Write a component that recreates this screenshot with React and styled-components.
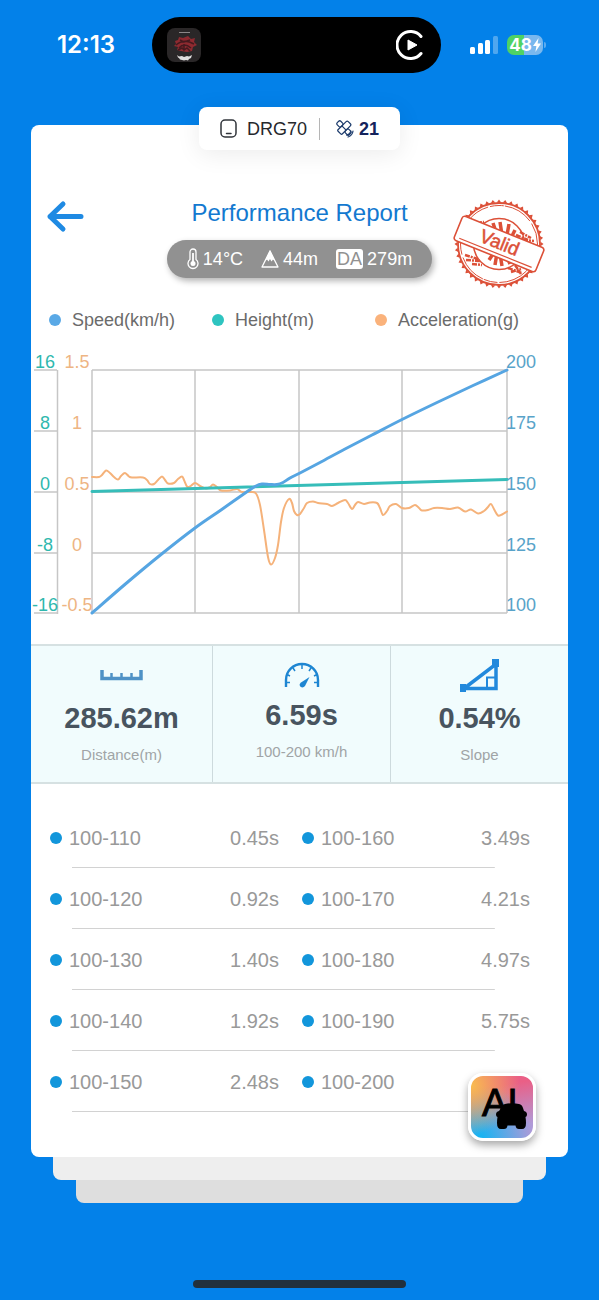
import React from 'react';
import styled, { createGlobalStyle } from 'styled-components';

const GlobalStyle = createGlobalStyle`
  * {
    box-sizing: border-box;
  }

  body {
    margin: 0;
    background: #0381e9;
    font-family: "Liberation Sans", Arial, sans-serif;
  }
`;

const legend = [
  { label: 'Speed(km/h)', color: '#5aa9e6' },
  { label: 'Height(m)', color: '#2ec4c0' },
  { label: 'Acceleration(g)', color: '#fab27b' },
];

const splits = [
  ['100-110', '0.45s', '100-160', '3.49s'],
  ['100-120', '0.92s', '100-170', '4.21s'],
  ['100-130', '1.40s', '100-180', '4.97s'],
  ['100-140', '1.92s', '100-190', '5.75s'],
  ['100-150', '2.48s', '100-200', ''],
];

// y positions of the grid lines with the label of each axis
const gridRows = [
  { y: 30, height: '16', accel: '1.5', speed: '200' },
  { y: 91, height: '8', accel: '1', speed: '175' },
  { y: 152, height: '0', accel: '0.5', speed: '150' },
  { y: 213, height: '-8', accel: '0', speed: '125' },
  { y: 273, height: '-16', accel: '-0.5', speed: '100' },
];

const gridCols = [61, 164, 268, 371, 476];

const speedPoints = [
  [61, 273], [95, 243.5], [130, 214.5], [164, 188],
  [190, 170], [217, 151], [224, 146.5], [231, 144], [239, 144.5], [246, 144.5],
  [252, 142.5], [259, 138], [269, 133], [289, 122.5], [314, 109], [341, 95], [371, 79.500],
  [406, 62.5], [441, 46], [476, 30],
];

const accelPoints = [
  [61, 137], [68, 137], [71, 135], [75, 130.5], [79, 133], [83, 137], [87, 139.5],
  [90, 136], [94, 133], [98, 136.5], [101, 137.5], [112, 137.5], [116, 140], [119, 144],
  [123, 144], [127, 140], [131, 136.5], [134, 140], [137, 143.5], [143, 143], [147, 139],
  [151, 136.5], [153, 140], [156, 146.5], [159, 146.5], [164, 143], [169, 146], [175, 148.5],
  [179, 147], [182, 144.5], [186, 147], [190, 150.5], [199, 150.5], [206, 149], [211, 152],
  [219, 152], [225, 153.5], [229, 165], [233, 190], [237, 217], [240, 224.5], [244, 218],
  [247, 205], [250, 182], [253, 168], [258, 159], [261, 163], [263, 171], [266, 175],
  [269, 174], [273, 168], [276, 163], [282, 161.5], [287, 163], [296, 164], [301, 166],
  [307, 163], [314, 160], [317, 163], [321, 169], [324, 165], [327, 162], [333, 164],
  [339, 162.5], [346, 163], [349, 168], [352, 175], [356, 171], [359, 166], [365, 164],
  [371, 168], [378, 168], [384, 165], [388, 168], [391, 170.5], [397, 170], [403, 168],
  [411, 168], [419, 169], [427, 167.5], [434, 171.5], [440, 169.5], [447, 173.5],
  [453, 171], [457, 167], [460, 164], [464, 171], [467, 175.5], [471, 174.5], [476, 171.5],
];

const smoothPath = (points) =>
  points.reduce((d, [x, y], i) => {
    if (i === 0) return `M${x} ${y}`;
    const [px, py] = points[i - 1];
    const [ax, ay] = points[i - 2] || points[i - 1];
    const [nx, ny] = points[i + 1] || points[i];
    return `${d}C${px + (x - ax) / 6} ${py + (y - ay) / 6} ${x - (nx - px) / 6} ${y - (ny - py) / 6} ${x} ${y}`;
  }, '');

const StatusBar = () => (
  <Status>
    <Time>12:13</Time>
    <Island>
      <NowPlaying />
      <CarPlayIcon />
    </Island>
    <Indicators>
      <svg width="28" height="18" viewBox="0 0 28 18" fill="#fff">
        <rect x="0" y="11" width="5" height="7" rx="1.5" />
        <rect x="8" y="7" width="5" height="11" rx="1.5" />
        <rect x="15" y="4" width="5" height="14" rx="1.5" />
        <rect x="23" y="0" width="5" height="18" rx="1.5" opacity="0.3" />
      </svg>
      <BatteryGroup>
        <Battery>
          48
          <svg width="8" height="14" viewBox="0 0 8 14" fill="#fff">
            <path d="M5.6 0 0 8h3.4L2.4 14 8 5.6H4.6z" />
          </svg>
        </Battery>
        <BatteryTip />
      </BatteryGroup>
    </Indicators>
  </Status>
);

const NowPlaying = () => (
  <svg width="34" height="34" viewBox="0 0 34 34">
    <rect width="34" height="34" rx="8" fill="#2a2728" />
    <path d="M12 4.500h11" stroke="#8b8788" />
    <path d="M8 13l3-1 1-3 4 1 5-2 3 3 4-1-1 4 3 3-4 2-1 4-5 1-6-1-4-1 1-3-4-1 2-2z" fill="#8e2a30" />
    <path d="M9 17q8-7 18-1M12 20q5-6 12 0M13 12l4 2 6-2M11 22l4-2 2 2 3-2 3 3M17 16v5" fill="none" stroke="#451a1e" strokeWidth="1.500" />
    <path d="M10 27l2 1.500 3-.5 2 1 3-1 2 .5 3-1.500-1 3-2 1-1 1.500-2-.5-2 .5-2-.5-2-.5-1-1.500-1-.5z" fill="#e0dede" />
  </svg>
);

const CarPlayIcon = () => (
  <svg width="30" height="32" viewBox="0 0 30 32">
    <path d="M25 7.500A13.500 13.500 0 1 0 25 24.500" fill="none" stroke="#fff" strokeWidth="3" strokeLinecap="round" />
    <path d="M12 11v10l9-5z" fill="#fff" stroke="#fff" strokeLinejoin="round" />
  </svg>
);

const DeviceIcon = () => (
  <svg width="18" height="20" viewBox="0 0 18 20" fill="none" stroke="#30343a" strokeWidth="1.500" strokeLinecap="round">
    <rect x="1" y="1" width="15" height="17" rx="4" />
    <path d="M6.500 14.500h4.500" />
  </svg>
);

const SatelliteIcon = () => (
  <svg width="18" height="18" viewBox="0 0 18 18" fill="none" stroke="#1b3a6b" strokeWidth="1.200" strokeLinecap="round" strokeLinejoin="round">
    <g transform="rotate(45 8 8)">
      <rect x="-.5" y="5.500" width="5.500" height="5" rx="1.500" />
      <rect x="11" y="5.500" width="5.500" height="5" rx="1.500" />
      <path d="M5 5.500V2q0-1.500 1.500-1.500h3Q11 .5 11 2v11.500q0 1-1.500 1h-3q-1.500 0-1.500-1V5.500M5 8h6" />
    </g>
    <path d="M14.800 11q-.5 3-4 4.200M17 11q-.5 4.500-5 6" />
  </svg>
);

const BackIcon = () => (
  <svg width="38" height="34" viewBox="0 0 38 34" fill="none" stroke="#1f8ae3" strokeWidth="5" strokeLinecap="round" strokeLinejoin="round">
    <path d="M4 16.500h31M17 4 4 16.500 17 29" />
  </svg>
);

const ThermometerIcon = () => (
  <svg width="12" height="22" viewBox="0 0 12 22" fill="none" stroke="#fff" strokeWidth="1.300">
    <path d="M3 11.500V4a3 3 0 0 1 6 0v7.500a5 5 0 1 1-6 0z" />
    <path d="M6 5v10" strokeWidth="1.800" />
    <circle cx="6" cy="15.500" r="2.500" fill="#fff" stroke="none" />
  </svg>
);

const MountainIcon = () => (
  <svg width="18" height="20" viewBox="0 0 18 20">
    <path d="M1 18 9 2l8 16z" fill="none" stroke="#fff" strokeWidth="1.300" strokeLinejoin="round" />
    <path d="M9 1l5 11-2-1.500-1.500 2L9 10l-1.500 2.500-1.500-2L4 12z" fill="#fff" />
  </svg>
);

const teeth = Array.from({ length: 44 }, (_, i) => i * (360 / 44));

const ValidStamp = () => (
  <svg width="92" height="94" viewBox="0 0 92 94" fill="none" stroke="#dc5038">
    {teeth.map((angle) => (
      <path key={angle} d="M43.800 5.500 46 2.500 48.200 5.500z" fill="#dc5038" stroke="none" transform={`rotate(${angle} 46 47)`} />
    ))}
    <circle cx="46" cy="47" r="41" strokeWidth="1.800" />
    <circle cx="46" cy="47" r="38.500" strokeWidth="1" strokeDasharray="60 2 14 1 30 3" />
    <circle cx="46" cy="47" r="25.500" strokeWidth="1.500" />
    <path d="M40 26l3 9M47 25l2 13M56 27l-2 11M62 33l-4 8M34 31l6 6M36 63l4-6M42 68l2-12M49 69l-2-12M57 67l-4-10" strokeWidth="3.500" />
    <path d="M21 26l10-1M22 29l12 2M63 38l12 5M67 35l11 6M70 43l11 1M12 58l13 4M13 63l14 1M19 67l10 1M55 71l14 5M58 75l10-3M62 68l6 9" strokeWidth="2.500" strokeDasharray="5 1 2 1" />
    <g transform="rotate(22 46 47)">
      <rect x="2" y="34" width="88" height="26" rx="3" fill="#fff" strokeWidth="1.600" />
      <path d="M7 56.500h78" strokeWidth="1.200" />
      <text x="46" y="52" textAnchor="middle" fontSize="19" fill="#dc5038" strokeWidth="0.500">Valid</text>
    </g>
  </svg>
);

const RulerIcon = () => (
  <svg width="43" height="14" viewBox="0 0 43 14" fill="none" stroke="#4f92c6">
    <path d="M2 1v8.500h39V1" strokeWidth="3.500" />
    <path d="M11.500 9V4M21.500 9V4M31.500 9V4" strokeWidth="2.500" />
  </svg>
);

const GaugeIcon = () => (
  <svg width="36" height="26" viewBox="0 0 36 26" fill="none" stroke="#1e86d2">
    <path d="M2 25V18a16 16 0 0 1 32 0v7" strokeWidth="2.400" />
    <path d="M18 3v4M9 6l2 3M27 6l-2 3M3 12.500l3 1.500M33 12.500l-3 1.500M2 20.500h4M34 20.500h-4" strokeWidth="1.500" />
    <path d="M25.500 15 21 24q-2 2.500-4.500.800-2-2.300.5-4.300z" fill="#1e86d2" stroke="none" />
  </svg>
);

const SlopeIcon = () => (
  <svg width="40" height="34" viewBox="0 0 40 34" fill="none" stroke="#2289dc">
    <path d="M4 29.500 36 5v24.500z" strokeWidth="3.500" />
    <path d="M27 29V18.500h9" strokeWidth="2" />
    <path d="M0 25h6v8H0zM32 0h7v8h-7z" fill="#2289dc" stroke="none" />
  </svg>
);

const AiIcon = () => (
  <svg width="62" height="62" viewBox="0 0 62 62">
    <text x="11" y="40" fontSize="38" stroke="#000">AI</text>
    <path d="M34 28q7-1.500 14 0 3 .5 4 4l1 3q3 .5 3 3.500 0 2-1.500 2.500.5 3 .5 6 0 6-4 6h-3q-3 0-3.500-3.500h-8Q36 53 33 53h-3q-4 0-4-6 0-3 .5-6-1.500-.5-1.500-2.500 0-3 3-3.500l2-3q1-3.500 4-4z" />
  </svg>
);

const Chart = () => (
  <ChartSvg viewBox="0 0 537 304" role="img" aria-label="Speed, height and acceleration">
    <g stroke="#c6c6c6" strokeWidth="1.500">
      {gridRows.map((row) => (
        <path key={row.y} d={`M3 ${row.y}h23M61 ${row.y}h415`} />
      ))}
      <path d="M26.500 30v244" />
      {gridCols.map((x) => (
        <path key={x} d={`M${x} 30v243`} />
      ))}
    </g>
    <g fill="none" strokeLinejoin="round" strokeLinecap="round">
      <path d={smoothPath(accelPoints)} stroke="#f5b27a" strokeWidth="2" />
      <path d="M61 151.500 476 139.500" stroke="#36bdb9" strokeWidth="3" />
      <path d={smoothPath(speedPoints)} stroke="#56a5e2" strokeWidth="3" />
    </g>
    <g fontSize="18" textAnchor="middle">
      {gridRows.map((row) => (
        <React.Fragment key={row.y}>
          <text x="14" y={row.y - 2} fill="#2fb8ae">{row.height}</text>
          <text x="46" y={row.y - 2} fill="#eeb583">{row.accel}</text>
          <text x="490" y={row.y - 2} fill="#58a3c9">{row.speed}</text>
        </React.Fragment>
      ))}
    </g>
  </ChartSvg>
);

const App = () => (
  <Page>
    <GlobalStyle />
    <StatusBar />
    <DeviceBar>
      <DeviceIcon />
      <DeviceName>DRG70</DeviceName>
      <SatelliteIcon />
      <Satellites>21</Satellites>
    </DeviceBar>
    <Card>
      <Header>
        <BackButton aria-label="Back">
          <BackIcon />
        </BackButton>
        <Heading>
          <Title>Performance Report</Title>
          <Conditions>
            <Condition><ThermometerIcon />14°C</Condition>
            <Condition><MountainIcon />44m</Condition>
            <Condition><Badge>DA</Badge>279m</Condition>
          </Conditions>
        </Heading>
        <Stamp>
          <ValidStamp />
        </Stamp>
      </Header>
      <Legend>
        {legend.map((item) => (
          <LegendItem key={item.label}>
            <Dot color={item.color} />
            {item.label}
          </LegendItem>
        ))}
      </Legend>
      <Chart />
      <Stats>
        <Stat>
          <StatIcon $height={36}><RulerIcon /></StatIcon>
          <StatValue>285.62m</StatValue>
          <StatLabel>Distance(m)</StatLabel>
        </Stat>
        <Stat>
          <StatIcon $height={33}><GaugeIcon /></StatIcon>
          <StatValue>6.59s</StatValue>
          <StatLabel>100-200 km/h</StatLabel>
        </Stat>
        <Stat>
          <StatIcon $height={36}><SlopeIcon /></StatIcon>
          <StatValue>0.54%</StatValue>
          <StatLabel>Slope</StatLabel>
        </Stat>
      </Stats>
      <Splits>
        <colgroup>
          <col width="29%" />
          <col width="23.5%" />
          <col width="29%" />
          <col width="18.5%" />
        </colgroup>
        <tbody>
          {splits.map(([range, time, nextRange, nextTime]) => (
            <SplitRow key={range}>
              <Range scope="row"><Dot color="#1296db" />{range}</Range>
              <SplitTime $gap>{time}</SplitTime>
              <Range scope="row"><Dot color="#1296db" />{nextRange}</Range>
              <SplitTime>{nextTime}</SplitTime>
            </SplitRow>
          ))}
        </tbody>
      </Splits>
      <AiButton aria-label="AI analysis">
        <AiIcon />
      </AiButton>
    </Card>
    <Sheet $inset={53} $color="#eeeeee" />
    <Sheet $inset={76} $color="#dedede" />
    <HomeIndicator />
  </Page>
);

const Page = styled.div`
  display: flex;
  flex-direction: column;
  min-height: 100vh;
  background: #0381e9;
`;

const Status = styled.div`
  display: grid;
  grid-template-columns: 1fr auto 1fr;
  align-items: center;
  padding: 17px 6px 0 0;
`;

const Time = styled.div`
  padding-left: 20px;
  font: 600 24px/28px Inter, sans-serif;
  text-align: center;
  color: #fff;
`;

const Island = styled.div`
  display: flex;
  align-items: center;
  justify-content: space-between;
  width: 289px;
  height: 56px;
  padding: 0 15px;
  border-radius: 28px;
  background: #000;
`;

const Indicators = styled.div`
  display: flex;
  align-items: center;
  gap: 9px;
  padding-left: 29px;
`;

const BatteryGroup = styled.div`
  display: flex;
  align-items: center;
  gap: 1px;
`;

const Battery = styled.div`
  display: flex;
  align-items: center;
  justify-content: center;
  gap: 1px;
  width: 36px;
  height: 20px;
  border-radius: 7px;
  background: linear-gradient(90deg, #4fd264 48%, #79b8ee 48%);
  font: 700 17px/20px Inter, sans-serif;
  color: #fff;
`;

const BatteryTip = styled.span`
  width: 2px;
  height: 6px;
  border-radius: 0 2px 2px 0;
  background: #5aabf0;
`;

const DeviceBar = styled.div`
  display: flex;
  align-items: center;
  align-self: center;
  z-index: 1;
  height: 43px;
  margin: 34px 0 -25px;
  padding: 0 21px;
  border-radius: 8px;
  background: #fff;
  box-shadow: 0 4px 24px rgba(0, 0, 0, 0.08);
`;

const DeviceName = styled.span`
  margin: 0 16px 0 9px;
  padding-right: 12px;
  border-right: 1px solid #b5b5b5;
  font-size: 18px;
  line-height: 22px;
  color: #26282c;
`;

const Satellites = styled.span`
  padding-left: 5px;
  font-size: 18px;
  font-weight: bold;
  line-height: 22px;
  color: #14235c;
`;

const Card = styled.main`
  position: relative;
  margin: 0 31px;
  padding: 72px 0 45px;
  border-radius: 8px;
  background: #fff;
`;

const Header = styled.header`
  display: grid;
  grid-template-columns: 1fr auto 1fr;
  align-items: start;
  padding: 0 15px;
`;

const BackButton = styled.button`
  justify-self: start;
  display: flex;
  padding: 3px 0 0;
  border: 0;
  background: none;
`;

const Heading = styled.div`
  display: flex;
  flex-direction: column;
  align-items: center;
  gap: 11px;
`;

const Title = styled.h1`
  margin: 0;
  font-size: 24px;
  font-weight: normal;
  line-height: 32px;
  color: #1379d0;
`;

const Conditions = styled.div`
  display: flex;
  align-items: center;
  gap: 18px;
  height: 38px;
  padding: 0 20px;
  border-radius: 19px;
  background: #919191;
  box-shadow: 2px 3px 6px rgba(0, 0, 0, 0.3);
`;

const Condition = styled.div`
  display: flex;
  align-items: center;
  gap: 4px;
  font-size: 18px;
  line-height: 20px;
  color: #fff;
`;

const Badge = styled.span`
  padding: 0 1px;
  border-radius: 3px;
  background: #fff;
  color: #919191;
`;

const Stamp = styled.div`
  display: flex;
  justify-self: end;
  margin-right: 8px;
`;

const Legend = styled.div`
  display: grid;
  grid-template-columns: repeat(3, 1fr);
  margin-top: 17px;
  padding: 0 30px 0 18px;
`;

const LegendItem = styled.div`
  display: flex;
  align-items: center;
  gap: 11px;
  font-size: 18px;
  line-height: 24px;
  color: #6b6b6b;
`;

const Dot = styled.span`
  display: inline-block;
  flex: none;
  width: 12px;
  height: 12px;
  border-radius: 50%;
  background: ${(props) => props.color};
`;

const ChartSvg = styled.svg`
  display: block;
  width: 100%;
  margin-top: 8px;
`;

const Stats = styled.section`
  display: grid;
  grid-template-columns: 181fr 178fr 178fr;
  border: solid #d6e1e2;
  border-width: 2px 0;
  background: #f1fcfd;
`;

const Stat = styled.div`
  display: flex;
  flex-direction: column;
  align-items: center;
  padding: 12px 0 17px;

  & + & {
    border-left: 1px solid #cddadd;
  }
`;

const StatIcon = styled.div`
  display: flex;
  align-items: center;
  height: ${(props) => props.$height}px;
`;

const StatValue = styled.div`
  margin-top: 8px;
  font-size: 29px;
  font-weight: bold;
  line-height: 32px;
  color: #48545f;
`;

const StatLabel = styled.div`
  margin-top: 11px;
  font-size: 15px;
  line-height: 20px;
  color: #a0a4a6;
`;

const Splits = styled.table`
  width: calc(100% - 57px);
  margin: 23px 38px 0 19px;
  border-collapse: collapse;
  table-layout: fixed;
  font-size: 20px;
  color: #999;
`;

const SplitRow = styled.tr`
  height: 61px;
  background: linear-gradient(#d2d2d2, #d2d2d2) no-repeat 22px 100% / calc(100% - 57px) 1px;
`;

const Range = styled.th`
  padding: 2px 0 0;
  font-weight: normal;
  text-align: left;
  white-space: nowrap;

  ${Dot} {
    margin-right: 7px;
    vertical-align: 1px;
  }
`;

const SplitTime = styled.td`
  padding: 2px ${(props) => (props.$gap ? '23px' : '0')} 0 0;
  text-align: right;
`;

const AiButton = styled.button`
  position: absolute;
  right: 32px;
  bottom: 16px;
  width: 68px;
  height: 68px;
  padding: 0;
  border: 3px solid #fff;
  border-radius: 15px;
  background:
    radial-gradient(circle at 0% 15%, #f9bd4f, transparent 60%),
    radial-gradient(circle at 15% 100%, #12b4f2, transparent 65%),
    linear-gradient(170deg, #ea5f86 20%, #b09ad8 80%);
  box-shadow: 0 4px 8px rgba(0, 0, 0, 0.35);
`;

const Sheet = styled.div`
  height: 23px;
  margin: 0 ${(props) => props.$inset}px;
  border-radius: 0 0 8px 8px;
  background: ${(props) => props.$color};
`;

const HomeIndicator = styled.div`
  align-self: center;
  width: 213px;
  height: 8px;
  margin: auto 0 12px;
  border-radius: 4px;
  background: #22303c;
`;

export default App;
